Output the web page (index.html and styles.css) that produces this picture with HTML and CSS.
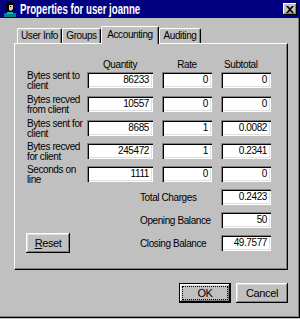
FILE: index.html
```html
<!DOCTYPE html>
<html lang="en">
<head>
    <meta charset="UTF-8">
    <title>Properties for user joanne</title>
    <link rel="stylesheet" href="styles.css">
</head>
<body>
<div class="window">
    <div class="titlebar">
        <svg class="user-icon" width="14" height="16" viewBox="0 0 14 16">
            <rect x="1" y="12" width="12" height="4" fill="#008080"/>
            <rect x="4" y="11" width="6" height="2" fill="#00c0c0"/>
            <path d="M3 2 L7 0 L11 1 L12 4 L11 7 L10 10 L8 11 L5 11 L3 9 Z" fill="#000"/>
            <path d="M6 4 L10 4 L10 8 L8 10 L6 9 Z" fill="#f0c8a0"/>
            <rect x="7" y="5" width="1" height="1" fill="#000"/>
        </svg>
        <span class="title">Properties for user joanne</span>
        <div class="close-btn">
            <svg width="8" height="7" viewBox="0 0 8 7">
                <path d="M0 0 L2 0 L4 2 L6 0 L8 0 L5 3.5 L8 7 L6 7 L4 5 L2 7 L0 7 L3 3.5 Z" fill="#000"/>
            </svg>
        </div>
    </div>

    <div class="dialog">
        <div class="tabs">
            <div class="tab t-user">User Info</div>
            <div class="tab t-groups">Groups</div>
            <div class="tab t-acct active">Accounting</div>
            <div class="tab t-audit">Auditing</div>
        </div>

        <div class="panel">
            <div class="head">
                <span></span>
                <span class="h-qty">Quantity</span>
                <span class="h-rate">Rate</span>
                <span class="h-sub">Subtotal</span>
            </div>

            <div class="row r1">
                <div class="label">Bytes sent to client</div>
                <div class="field qty">86233</div>
                <div class="field small">0</div>
                <div class="field small">0</div>
            </div>
            <div class="row r2">
                <div class="label">Bytes recved from client</div>
                <div class="field qty">10557</div>
                <div class="field small">0</div>
                <div class="field small">0</div>
            </div>
            <div class="row r3">
                <div class="label">Bytes sent for client</div>
                <div class="field qty">8685</div>
                <div class="field small">1</div>
                <div class="field small">0.0082</div>
            </div>
            <div class="row">
                <div class="label">Bytes recved for client</div>
                <div class="field qty">245472</div>
                <div class="field small">1</div>
                <div class="field small">0.2341</div>
            </div>
            <div class="row">
                <div class="label">Seconds on line</div>
                <div class="field qty">1111</div>
                <div class="field small">0</div>
                <div class="field small">0</div>
            </div>

            <div class="trow">
                <div class="left"></div>
                <div class="tlabel">Total Charges</div>
                <div class="field small">0.2423</div>
            </div>
            <div class="trow">
                <div class="left"></div>
                <div class="tlabel">Opening Balance</div>
                <div class="field small">50</div>
            </div>
            <div class="trow">
                <div class="left"><div class="btn reset"><u>R</u>eset</div></div>
                <div class="tlabel">Closing Balance</div>
                <div class="field small">49.7577</div>
            </div>
        </div>

        <div class="actions">
            <div class="btn default"><span class="focus">OK</span></div>
            <div class="btn">Cancel</div>
        </div>
    </div>
</div>
</body>
</html>
```

FILE: styles.css
```css
body {
    margin: 0;
    background: #c0c0c0;
    font-family: "Liberation Sans", Arial, sans-serif;
    font-size: 10px;
    letter-spacing: -0.4px;
    color: #000;
}

.window {
    width: 300px;
    height: 318px;
    box-sizing: border-box;
    background: #c0c0c0;
    box-shadow: inset -1px -1px #000, inset -2px -2px #808080;
}

.titlebar {
    height: 18px;
    background: #000080;
    display: flex;
    align-items: center;
    padding: 0 3px;
}
.user-icon {
    flex: none;
}
.title {
    color: #fff;
    font-weight: bold;
    font-size: 14px;
    letter-spacing: 0;
    margin-left: 3px;
    flex: 1;
    white-space: nowrap;
    transform: scaleX(0.69);
    transform-origin: left center;
}
.close-btn {
    width: 14px;
    height: 12px;
    background: #c0c0c0;
    box-shadow: inset -1px -1px #000, inset 1px 1px #fff, inset -2px -2px #808080;
    display: flex;
    align-items: center;
    justify-content: center;
}

.dialog {
    padding: 0 12px 0 14px;
}

.tabs {
    display: flex;
    align-items: flex-end;
    margin-top: 8px;
    padding-left: 3px;
    height: 17px;
}
.tab {
    height: 15px;
    line-height: 14px;
    text-align: center;
    box-sizing: border-box;
    border-radius: 2px 2px 0 0;
    border-top: 1px solid #fff;
    border-left: 1px solid #fff;
    border-right: 1px solid #000;
    box-shadow: inset -1px 0 #808080;
    white-space: nowrap;
}
.t-user { width: 45px; }
.t-groups { width: 39px; }
.t-acct { width: 58px; }
.t-audit { width: 42px; }
.tab.active {
    height: 18px;
    margin-bottom: -1px;
    position: relative;
    z-index: 1;
    background: #c0c0c0;
    line-height: 15px;
}

.panel {
    height: 227px;
    box-sizing: border-box;
    border-top: 1px solid #fff;
    border-left: 1px solid #fff;
    border-right: 1px solid #000;
    border-bottom: 1px solid #000;
    box-shadow: inset -1px -1px #808080;
    padding: 15px 0 0 12px;
}

.head {
    display: grid;
    grid-template-columns: 60px 66px 59px 59px;
    height: 11px;
    line-height: 11px;
}
.h-qty { text-align: center; }
.h-rate { text-align: center; padding-left: 9px; }
.h-sub { padding-left: 12px; }

.row {
    display: grid;
    grid-template-columns: 60px 66px 59px 59px;
    height: 16px;
    margin-top: 7px;
}
.row.r1 { margin-top: 2px; }
.row.r2, .row.r3 { margin-top: 8px; }

.label {
    line-height: 10px;
    margin-top: -1px;
    padding-right: 2px;
}

.field {
    background: #fff;
    height: 16px;
    box-sizing: border-box;
    line-height: 16px;
    text-align: right;
    padding-right: 4px;
    overflow: hidden;
    white-space: nowrap;
    box-shadow: inset 1px 1px #808080, inset 2px 2px #000, inset -1px -1px #fff, inset -2px -2px #dfdfdf;
}
.field.small {
    width: 50px;
    justify-self: end;
}

.trow {
    display: flex;
    align-items: center;
    height: 16px;
    margin-top: 7px;
}
.trow .left {
    width: 113px;
    display: flex;
}
.tlabel {
    width: 81px;
    white-space: nowrap;
}

.btn {
    background: #c0c0c0;
    box-sizing: border-box;
    height: 20px;
    line-height: 20px;
    text-align: center;
    font-size: 11px;
    box-shadow: inset -1px -1px #000, inset 1px 1px #fff, inset -2px -2px #808080, inset 2px 2px #dfdfdf;
}
.reset {
    width: 44px;
    margin-left: -1px;
}

.actions {
    display: flex;
    justify-content: flex-end;
    gap: 5px;
    margin-top: 13px;
}
.actions .btn {
    width: 52px;
}
.btn.default {
    border: 1px solid #000;
    display: flex;
    padding: 3px;
}
.focus {
    flex: 1;
    line-height: 12px;
    outline: 1px dotted #000;
}
```
